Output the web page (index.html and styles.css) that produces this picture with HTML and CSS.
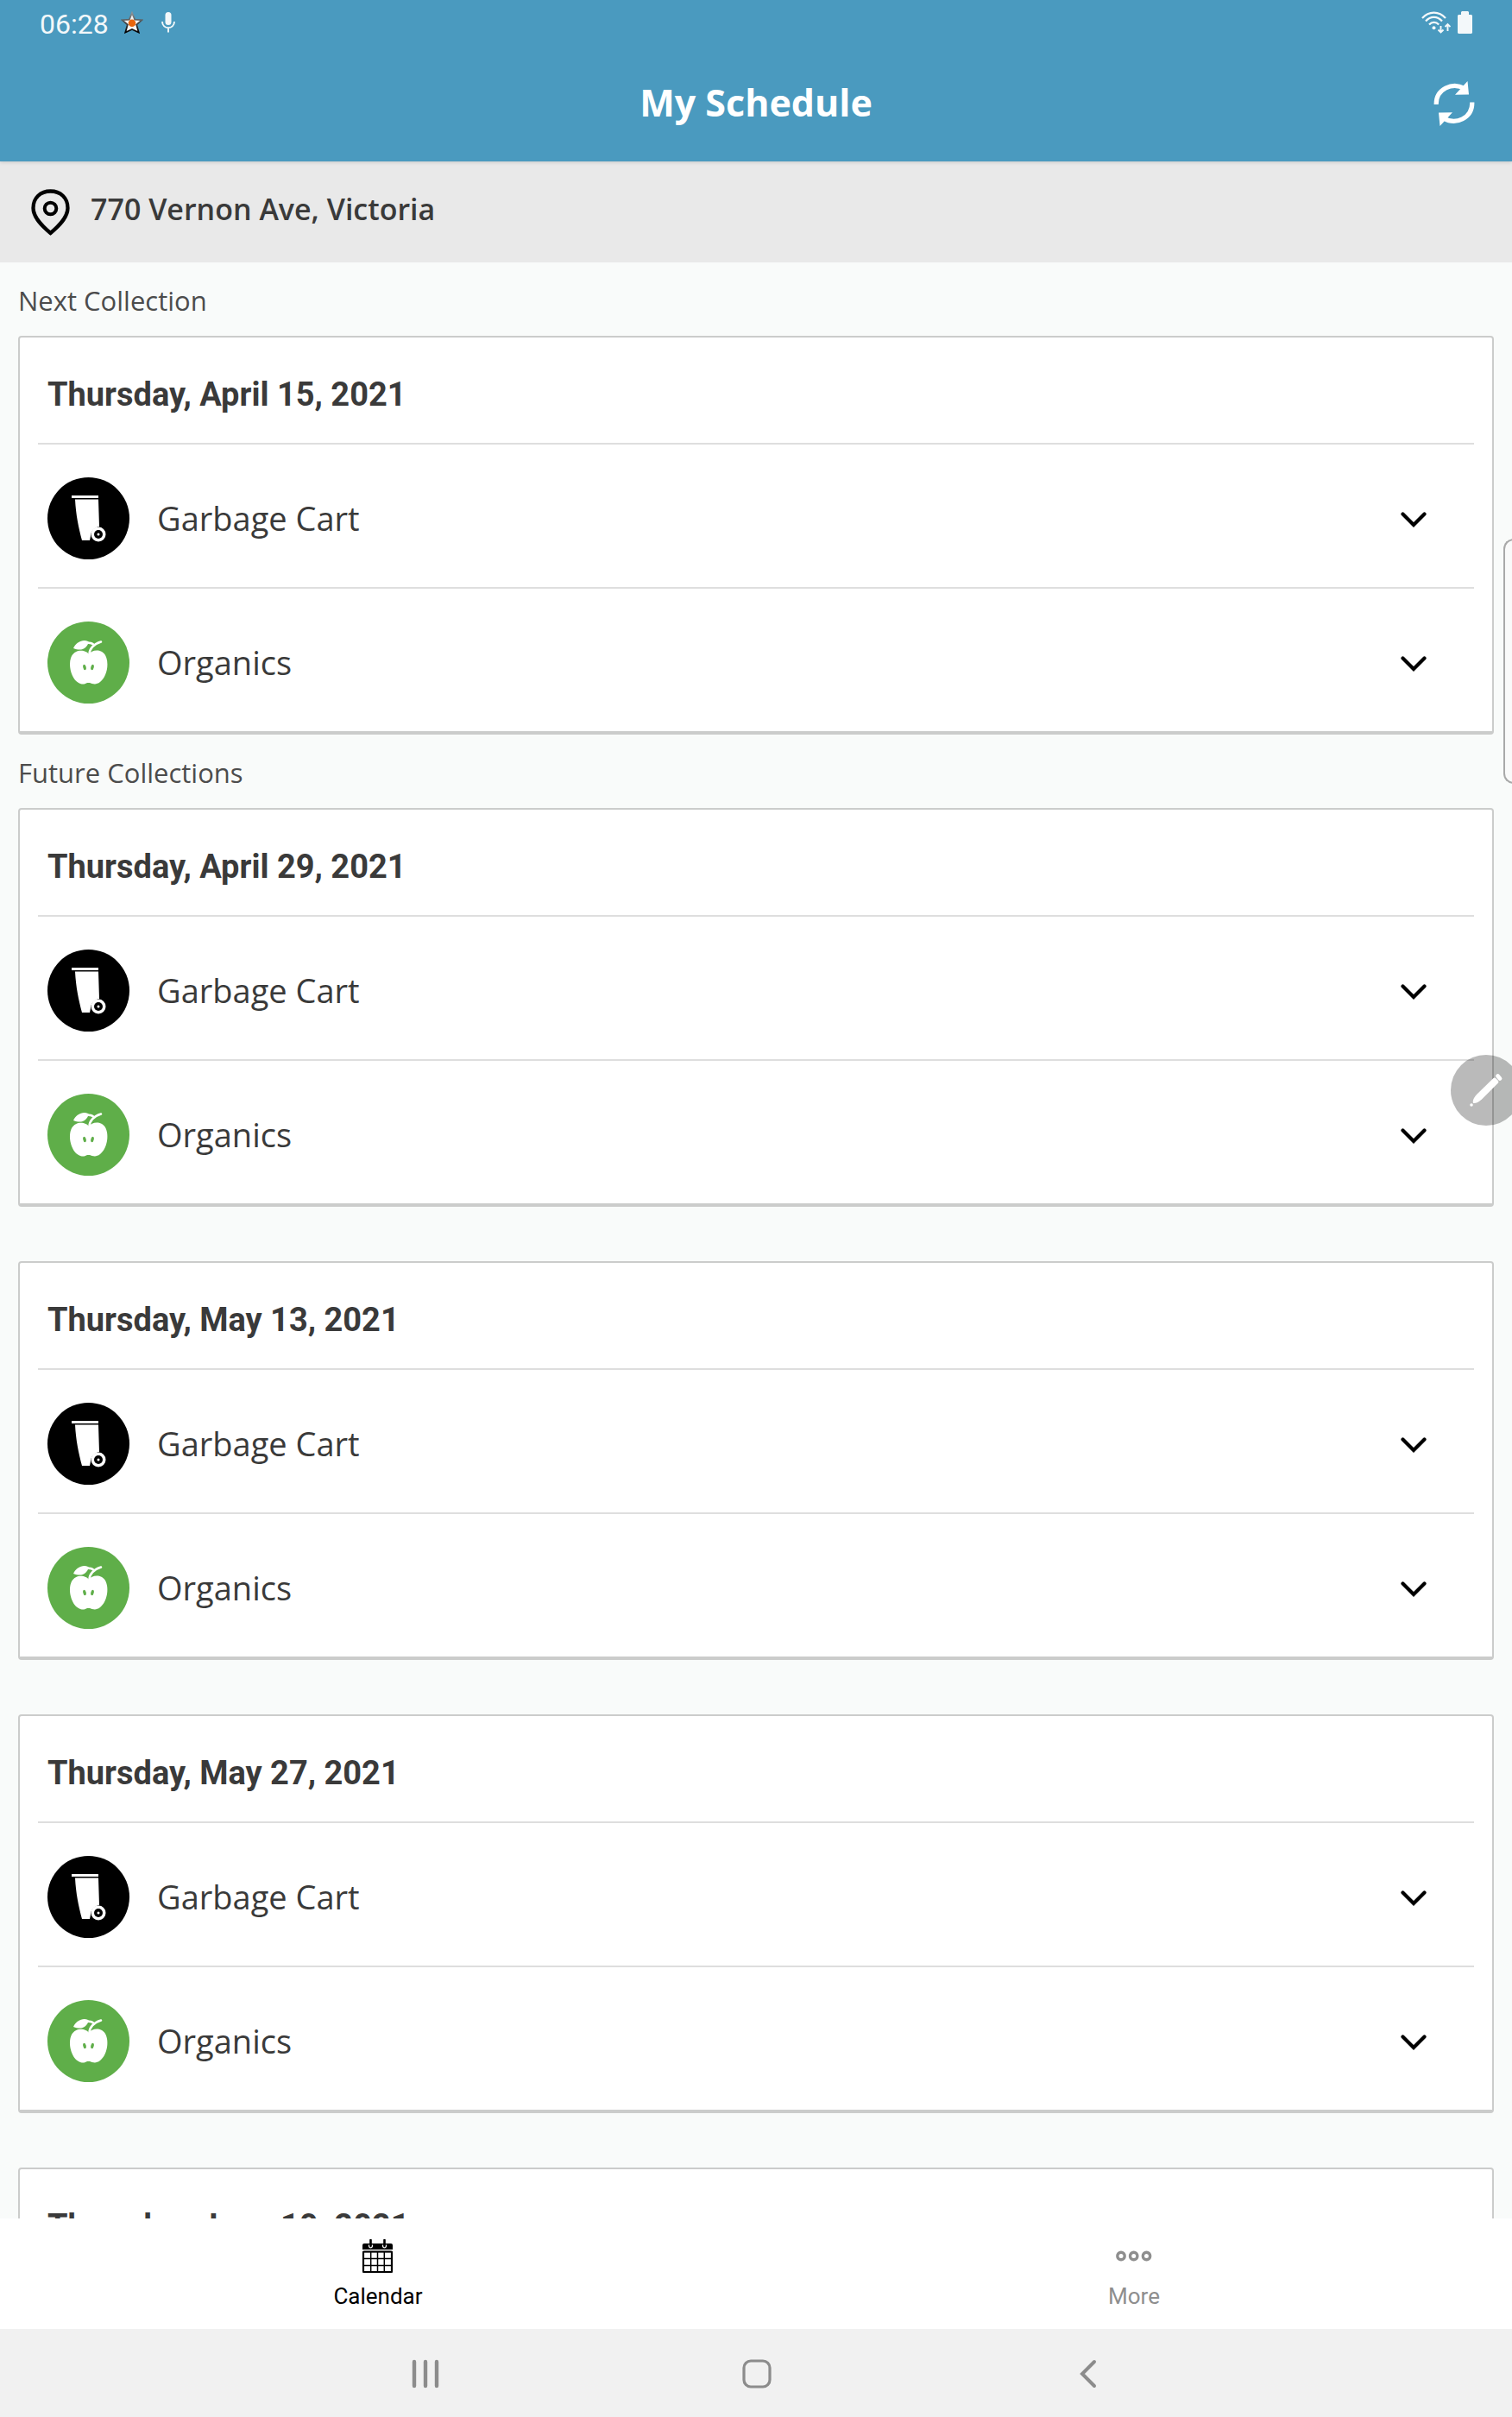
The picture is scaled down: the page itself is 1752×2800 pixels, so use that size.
FILE: index.html
```html
<!DOCTYPE html>
<html lang="en">
<head>
<meta charset="utf-8">
<meta name="viewport" content="width=device-width, initial-scale=1">
<title>My Schedule</title>
<link rel="stylesheet" href="styles.css">
</head>
<body>
<svg class="sprite" aria-hidden="true">
  <symbol id="cart" viewBox="0 0 95 95">
    <circle cx="47.500" cy="47.500" r="47.500" fill="#000"/>
    <path d="M28 21h31v3H28zM32 25.500h27l1 31.500c-6 1-10 6-10 11l-1 5h-9C36 58 33 44 32 25.500z" fill="#fff"/>
    <circle cx="59" cy="66" r="8.500" fill="#fff"/>
    <circle cx="59" cy="66" r="5" fill="#000"/>
    <circle cx="59" cy="66" r="1.500" fill="#fff"/>
  </symbol>
  <symbol id="apple" viewBox="0 0 95 95">
    <circle cx="47.500" cy="47.500" r="47.500" fill="#5fae49"/>
    <path d="M48 38c-3-5-15-7-20 2-5 10 0 27 8 31 5 3 8 1 10 0h3c3 1 7 3 12-1 8-6 11-22 6-31-5-8-16-6-19-1z" fill="#fff"/>
    <path d="M30 31c3-7 11-11 17-8l1 1c-3 7-8 11-18 7z" fill="#fff"/>
    <path d="M45 24.500c4 0 6 0 8 2M48.500 38c0-6 5-12 13.500-14.500" fill="none" stroke="#fff" stroke-width="2.600" stroke-linecap="round"/>
    <ellipse cx="43" cy="53" rx="1.700" ry="3.200" transform="rotate(-14 43 53)" fill="#5fae49"/>
    <ellipse cx="52" cy="53" rx="1.700" ry="3.200" transform="rotate(14 52 53)" fill="#5fae49"/>
  </symbol>
  <symbol id="chevron" viewBox="0 0 30 18">
    <path d="M2.500 2.500L15 15 27.500 2.500" fill="none" stroke="#000" stroke-width="4.200" stroke-linecap="round"/>
  </symbol>
</svg>

<header class="top">
  <div class="status">
    <div class="status-group">
      <time class="clock">06:28</time>
      <svg class="star" viewBox="0 0 26 26" aria-hidden="true">
        <defs><linearGradient id="edge" x1="0" y1="0" x2="0" y2="1"><stop offset="0" stop-color="#8b9296"/><stop offset="1" stop-color="#000"/></linearGradient></defs>
        <path d="M13 2l3.200 7.600 8.300.6-6.300 5.300 2.500 9L13 21l-7.700 3.500 2.500-9L1.500 10.200l8.300-.6z" fill="#f4f4f4" stroke="url(#edge)" stroke-width="1.800"/>
        <circle cx="13" cy="13.800" r="4.300" fill="#e8650c"/>
      </svg>
      <svg class="mic" viewBox="0 0 16 24" aria-hidden="true">
        <rect x="4.500" y="0" width="7" height="15" rx="3.500" fill="#f3f8fa"/>
        <path d="M1 11c0 9.500 14 9.500 14 0M8 18v5.500" fill="none" stroke="#f3f8fa" stroke-width="1.900"/>
      </svg>
    </div>
    <div class="status-group status-right">
      <svg class="wifi" viewBox="0 0 34 26" aria-hidden="true">
        <g fill="none" stroke="#f3f8fa" stroke-width="2.200">
          <path d="M1 8c7.500-8.500 19.500-8.500 27 0"/><path d="M5 11.500c5.500-6.200 13.500-6.200 19 0"/><path d="M9 15.500c3.200-3.600 8-3.600 11.200 0"/>
          <path d="M22.500 17v7M19.500 21.500l3 3 3-3M30.500 23v-7M27.500 18l3-3 3 3" stroke-width="1.900"/>
        </g>
        <circle cx="14.500" cy="19.300" r="2" fill="#f3f8fa"/>
      </svg>
      <svg class="battery" viewBox="0 0 17 26" aria-hidden="true">
        <path d="M5 0h7l1 1v3h3l1 1v20l-1 1H1l-1-1V5l1-1h3V1z" fill="#f3f8fa"/>
      </svg>
    </div>
  </div>
  <div class="title-bar">
    <h1 class="title">My Schedule</h1>
    <button class="refresh" type="button" aria-label="Refresh">
      <svg class="refresh-icon" viewBox="0 0 48 52" aria-hidden="true">
        <path d="M3.200 27C2.800 9 22 .5 36 8.500M44.800 24.500C45.200 42.500 26 51.500 12 43" fill="none" stroke="#fff" stroke-width="5.200"/>
        <path d="M39.500 0l1.500 15.500-16 .3zM7.500 52L6 36.500l16-.3z" fill="#fff"/>
      </svg>
    </button>
  </div>
</header>

<section class="address">
  <svg class="pin" viewBox="0 0 45 54" aria-hidden="true">
    <path d="M22.500 51C13 43 2.500 33 2.500 22 2.500 10 11 2.500 22.500 2.500S42.500 10 42.500 22C42.500 33 32 43 22.500 51z" fill="none" stroke="#000" stroke-width="4.300"/>
    <circle cx="22.500" cy="22.500" r="6.800" fill="none" stroke="#000" stroke-width="4"/>
  </svg>
  <span class="address-text">770 Vernon Ave, Victoria</span>
</section>

<main class="schedule">
  <h2 class="section-label">Next Collection</h2>
  <article class="card">
    <h3 class="date">Thursday, April 15, 2021</h3>
    <button class="item" type="button"><svg class="item-icon"><use href="#cart"/></svg><span class="item-name">Garbage Cart</span><svg class="chevron"><use href="#chevron"/></svg></button>
    <button class="item" type="button"><svg class="item-icon"><use href="#apple"/></svg><span class="item-name">Organics</span><svg class="chevron"><use href="#chevron"/></svg></button>
  </article>

  <h2 class="section-label">Future Collections</h2>
  <div class="cards">
    <article class="card">
      <h3 class="date">Thursday, April 29, 2021</h3>
      <button class="item" type="button"><svg class="item-icon"><use href="#cart"/></svg><span class="item-name">Garbage Cart</span><svg class="chevron"><use href="#chevron"/></svg></button>
      <button class="item" type="button"><svg class="item-icon"><use href="#apple"/></svg><span class="item-name">Organics</span><svg class="chevron"><use href="#chevron"/></svg></button>
    </article>
    <article class="card">
      <h3 class="date">Thursday, May 13, 2021</h3>
      <button class="item" type="button"><svg class="item-icon"><use href="#cart"/></svg><span class="item-name">Garbage Cart</span><svg class="chevron"><use href="#chevron"/></svg></button>
      <button class="item" type="button"><svg class="item-icon"><use href="#apple"/></svg><span class="item-name">Organics</span><svg class="chevron"><use href="#chevron"/></svg></button>
    </article>
    <article class="card">
      <h3 class="date">Thursday, May 27, 2021</h3>
      <button class="item" type="button"><svg class="item-icon"><use href="#cart"/></svg><span class="item-name">Garbage Cart</span><svg class="chevron"><use href="#chevron"/></svg></button>
      <button class="item" type="button"><svg class="item-icon"><use href="#apple"/></svg><span class="item-name">Organics</span><svg class="chevron"><use href="#chevron"/></svg></button>
    </article>
    <article class="card">
      <h3 class="date">Thursday, June 10, 2021</h3>
    </article>
  </div>
</main>

<nav class="tabs" aria-label="Main">
  <a class="tab tab-active" href="#calendar" aria-current="page">
    <svg class="tab-icon" viewBox="0 0 42 40" aria-hidden="true">
      <path d="M3 12V7q0-2 2-2h31q2 0 2 2v5z" fill="#000"/>
      <path d="M12.500 8v-7M28.500 8v-7" stroke="#000" stroke-width="2.600" stroke-linecap="round"/>
      <path d="M10.500 6.500c-.5 4.500 4.500 4.500 4 0M26.500 6.500c-.5 4.500 4.500 4.500 4 0" fill="none" stroke="#fff" stroke-width="1.300"/>
      <path d="M4 14.500h33V38H4zM12.700 14v24M20.500 14v24M28.300 14v24M4 22.500h33M4 30.500h33" fill="none" stroke="#000" stroke-width="1.500"/>
      <rect x="4" y="14.500" width="33" height="23.500" rx="1" fill="none" stroke="#000" stroke-width="2.200"/>
    </svg>
    <span class="tab-name">Calendar</span>
  </a>
  <a class="tab" href="#more">
    <svg class="tab-icon" viewBox="0 0 42 40" aria-hidden="true">
      <g fill="none" stroke="#8e8e8e" stroke-width="3.400"><circle cx="6" cy="19.500" r="4.200"/><circle cx="20.700" cy="19.500" r="4.200"/><circle cx="35.500" cy="19.500" r="4.200"/></g>
    </svg>
    <span class="tab-name">More</span>
  </a>
</nav>

<div class="system-nav">
  <button class="key" type="button" aria-label="Recent apps"><svg class="key-icon" viewBox="0 0 36 36"><path d="M7 4v28M20 4v28M33 4v28" stroke="#8c8c8c" stroke-width="4.400" stroke-linecap="round"/></svg></button>
  <button class="key" type="button" aria-label="Home"><svg class="key-icon" viewBox="0 0 36 36"><rect x="4" y="3" width="30" height="30" rx="8" fill="none" stroke="#8c8c8c" stroke-width="3.200"/></svg></button>
  <button class="key" type="button" aria-label="Back"><svg class="key-icon" viewBox="0 0 36 36"><path d="M25 4L11 18l14 14" fill="none" stroke="#8c8c8c" stroke-width="4" stroke-linecap="round"/></svg></button>
</div>

<div class="edge-handle"></div>
<button class="pen" type="button" aria-label="Edit">
  <svg class="pen-icon" viewBox="0 0 82 82" aria-hidden="true">
    <path d="M49.500 27q1.500-1 3 .5l2 2q1.500 1.500.5 3L36 51.500c-4 3.500-7 5-10 4.500-1-3 1-7 4.500-10.500z" fill="#fff"/>
    <path d="M54.500 24.500l2.500 3" stroke="#fff" stroke-width="4.800" stroke-linecap="round"/>
    <circle cx="24" cy="58" r="1.800" fill="#fff"/>
  </svg>
</button>
</body>
</html>
```

FILE: styles.css
```css
* {
  box-sizing: border-box;
}

body {
  margin: 0;
  height: 100vh;
  position: relative;
  display: flex;
  flex-direction: column;
  overflow: hidden;
  background: #f9fbfa;
  color: #3a3a3a;
  font-family: "Open Sans", sans-serif;
}

h1,
h2,
h3 {
  margin: 0;
}

button {
  margin: 0;
  padding: 0;
  border: 0;
  background: none;
  color: inherit;
  font: inherit;
}

svg {
  display: block;
  flex: none;
}

.sprite {
  position: absolute;
  width: 0;
  height: 0;
}

/* Header */
.top {
  position: relative;
  flex: none;
  background: #4a9abf;
  box-shadow: 0 1px 4px rgba(0, 0, 0, 0.15);
}

.status {
  display: flex;
  justify-content: space-between;
  align-items: center;
  height: 52px;
  padding: 0 46px;
}

.status-group {
  display: flex;
  align-items: center;
}

.status-right {
  gap: 8px;
}

.clock {
  padding-top: 4px;
  color: #f3f8fa;
  font: 400 32px/48px Roboto, sans-serif;
}

.star {
  width: 26px;
  height: 26px;
  margin: 0 21px 0 14px;
}

.mic {
  width: 16px;
  height: 24px;
}

.wifi {
  width: 34px;
  height: 26px;
}

.battery {
  width: 17px;
  height: 26px;
}

.title-bar {
  display: grid;
  grid-template-columns: 1fr auto 1fr;
  align-items: center;
  height: 135px;
  padding: 0 43px;
}

.title {
  grid-column: 2;
  padding-bottom: 2px;
  color: #fff;
  font-size: 43px;
  font-weight: 700;
  line-height: 60px;
}

.refresh {
  justify-self: end;
}

.refresh-icon {
  width: 48px;
  height: 52px;
}

/* Address */
.address {
  display: flex;
  align-items: center;
  gap: 24px;
  flex: none;
  height: 117px;
  padding: 0 36px;
  background: #e9e9e9;
}

.pin {
  width: 45px;
  height: 54px;
}

.address-text {
  padding-bottom: 8px;
  font-size: 34px;
  font-weight: 600;
  line-height: 48px;
}

/* Collections */
.schedule {
  flex: 1;
  min-height: 0;
  padding: 0 21px;
  overflow: hidden;
}

.section-label {
  padding: 20px 0 17px;
  color: #4c4c4c;
  font-size: 31px;
  font-weight: 400;
  line-height: 48px;
}

.cards {
  display: flex;
  flex-direction: column;
  gap: 63px;
}

.card {
  padding: 0 21px;
  border: 2px solid #cbcccb;
  border-bottom-width: 4px;
  border-radius: 4px;
  background: #fff;
}

.date {
  padding: 42px 11px 32px;
  font: 700 38px/48px Roboto, sans-serif;
}

.item {
  display: flex;
  align-items: center;
  width: 100%;
  padding: 38px 55px 32px 11px;
  border-top: 2px solid #dedede;
  text-align: left;
}

.item-icon {
  width: 95px;
  height: 95px;
}

.item-name {
  flex: 1;
  padding: 0 0 2px 32px;
  font-size: 38px;
  line-height: 48px;
}

.chevron {
  width: 30px;
  height: 18px;
  margin-top: 2px;
}

/* Tabs */
.tabs {
  position: relative;
  display: grid;
  grid-template-columns: 1fr 1fr;
  flex: none;
  height: 128px;
  background: #fff;
}

.tab {
  display: flex;
  flex-direction: column;
  align-items: center;
  gap: 10px;
  padding-top: 24px;
  color: #8e8e8e;
  font: 400 26px/32px Roboto, sans-serif;
  text-decoration: none;
}

.tab-active {
  color: #000;
}

.tab-icon {
  width: 42px;
  height: 40px;
}

/* System keys */
.system-nav {
  display: grid;
  grid-template-columns: repeat(3, 1fr);
  flex: none;
  height: 102px;
  padding: 2px 17% 0;
  background: #f1f1f1;
}

.key {
  display: grid;
  place-items: center;
}

.key-icon {
  width: 36px;
  height: 36px;
}

/* Controls floating over the screen edge */
.edge-handle {
  position: absolute;
  top: 624px;
  right: -2px;
  width: 12px;
  height: 284px;
  border: 2px solid #a9a9a9;
  border-right: 0;
  border-radius: 12px 0 0 12px;
  background: #fafafa;
}

.pen {
  position: absolute;
  top: 1222px;
  right: -11px;
  width: 82px;
  height: 82px;
  border-radius: 50%;
  background: rgba(0, 0, 0, 0.27);
}

.pen-icon {
  width: 82px;
  height: 82px;
}
```
